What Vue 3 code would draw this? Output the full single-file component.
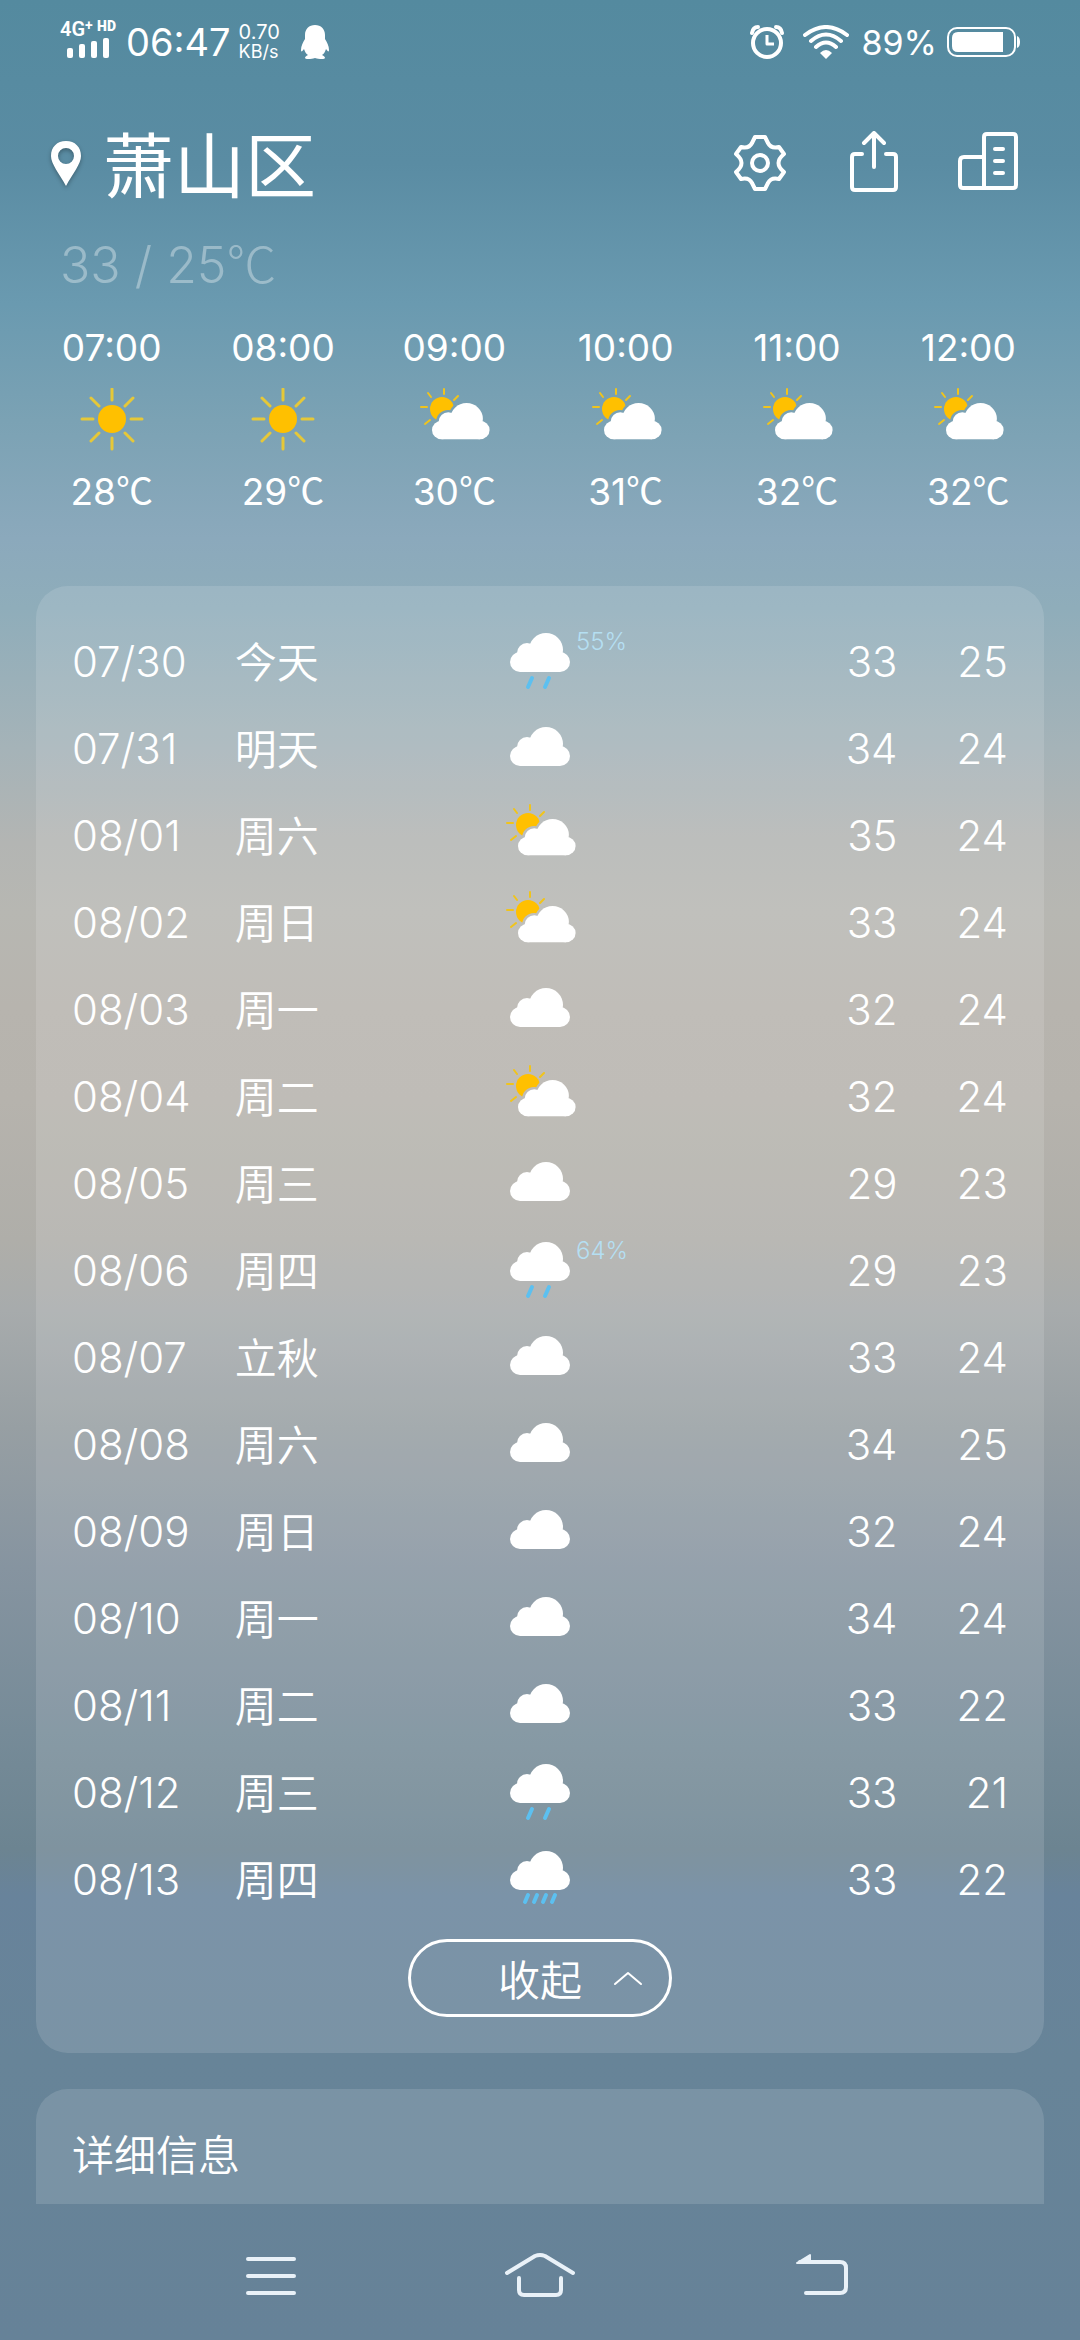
<script setup>
import { ref, computed } from 'vue'

const hours = [
  { time: '07:00', icon: 'sun', temp: 28 },
  { time: '08:00', icon: 'sun', temp: 29 },
  { time: '09:00', icon: 'partly', temp: 30 },
  { time: '10:00', icon: 'partly', temp: 31 },
  { time: '11:00', icon: 'partly', temp: 32 },
  { time: '12:00', icon: 'partly', temp: 32 }
]

const days = [
  { date: '07/30', name: '今天', icon: 'rain', chance: '55%', high: 33, low: 25 },
  { date: '07/31', name: '明天', icon: 'cloud', high: 34, low: 24 },
  { date: '08/01', name: '周六', icon: 'partly', high: 35, low: 24 },
  { date: '08/02', name: '周日', icon: 'partly', high: 33, low: 24 },
  { date: '08/03', name: '周一', icon: 'cloud', high: 32, low: 24 },
  { date: '08/04', name: '周二', icon: 'partly', high: 32, low: 24 },
  { date: '08/05', name: '周三', icon: 'cloud', high: 29, low: 23 },
  { date: '08/06', name: '周四', icon: 'rain', chance: '64%', high: 29, low: 23 },
  { date: '08/07', name: '立秋', icon: 'cloud', high: 33, low: 24 },
  { date: '08/08', name: '周六', icon: 'cloud', high: 34, low: 25 },
  { date: '08/09', name: '周日', icon: 'cloud', high: 32, low: 24 },
  { date: '08/10', name: '周一', icon: 'cloud', high: 34, low: 24 },
  { date: '08/11', name: '周二', icon: 'cloud', high: 33, low: 22 },
  { date: '08/12', name: '周三', icon: 'rain', high: 33, low: 21 },
  { date: '08/13', name: '周四', icon: 'heavy', high: 33, low: 22 }
]

const expanded = ref(true)
const shownDays = computed(() => (expanded.value ? days : days.slice(0, 5)))
</script>

<template>
  <div class="app">
    <svg class="defs" aria-hidden="true">
      <defs>
        <g id="cloud-shape">
          <circle cx="10" cy="29" r="10" />
          <circle cx="50" cy="29" r="10" />
          <rect x="10" y="19" width="40" height="20" />
          <circle cx="36" cy="17" r="17" />
          <circle cx="17" cy="20" r="10" />
        </g>
        <mask id="sun-mask" maskUnits="userSpaceOnUse" x="0" y="-4" width="80" height="68">
          <rect x="0" y="-4" width="80" height="68" fill="#fff" />
          <use href="#cloud-shape" transform="translate(17 14)" fill="#000" stroke="#000" stroke-width="4" />
        </mask>
        <symbol id="icon-sun" viewBox="0 0 80 64">
          <circle cx="40" cy="31" r="14" fill="#ffc000" />
          <path d="M40 1v11M40 50v11M10 31h11M59 31h11M19 10l8 8M61 10l-8 8M19 53l8-8M61 53l-8-8" stroke="#e6c838" stroke-width="3" stroke-linecap="round" />
        </symbol>
        <symbol id="icon-partly" viewBox="0 0 80 64">
          <g mask="url(#sun-mask)">
            <circle cx="28" cy="21" r="12" fill="#ffc000" />
            <path d="M30 1v5M14 5l3 4M7 19h6M11 36l5-4M44 8l-4 4" stroke="#f0c41c" stroke-width="2" stroke-linecap="round" />
          </g>
          <use href="#cloud-shape" transform="translate(18 15) scale(.96 .93)" fill="#fff" />
        </symbol>
        <symbol id="icon-cloud" viewBox="0 0 80 64">
          <use href="#cloud-shape" x="10" y="10" fill="#fff" />
        </symbol>
        <symbol id="icon-rain" viewBox="0 0 80 64">
          <use href="#cloud-shape" x="10" y="3" fill="#fff" />
          <path d="M32 48l-4 9M49 48l-4 9" stroke="#5cc0f0" stroke-width="4" stroke-linecap="round" />
        </symbol>
        <symbol id="icon-heavy" viewBox="0 0 80 64">
          <use href="#cloud-shape" x="10" y="3" fill="#fff" />
          <path d="M28 47l-3 7M37 47l-3 7M46 47l-3 7M55 47l-3 7" stroke="#5cc0f0" stroke-width="4" stroke-linecap="round" />
        </symbol>
      </defs>
    </svg>

    <div class="status">
      <div class="signal">
        <div class="net"><b>4G</b><b class="plus">+</b><b class="hd">HD</b></div>
        <svg width="42" height="20" viewBox="0 0 42 20" fill="#fff">
          <rect x="0" y="10" width="6" height="10" rx="2" />
          <rect x="12" y="6" width="6" height="14" rx="2" />
          <rect x="24" y="3" width="6" height="17" rx="2" />
          <rect x="36" y="0" width="6" height="20" rx="2" />
        </svg>
      </div>
      <span class="clock">06:47</span>
      <div class="speed"><span>0.70</span><span class="unit">KB/s</span></div>
      <svg class="qq" width="28" height="34" viewBox="0 0 28 34" fill="#fff">
        <path d="M14 0C8 0 4 4 4 10v4C2 17 0 21 0 25c0 2 1 2 3-1 1 3 2 5 4 6-2 1-3 2-3 3 0 1 3 1 5 1 3 0 4-1 5-1s2 1 5 1c2 0 5 0 5-1s-1-2-3-3c2-1 3-3 4-6 2 3 3 3 3 1 0-4-2-8-4-11v-4C24 4 20 0 14 0z" />
      </svg>
      <span class="fill"></span>
      <svg width="36" height="36" viewBox="0 0 36 36" fill="none" stroke="#fff">
        <circle cx="18" cy="19" r="14" stroke-width="4" />
        <path d="M18 11v9h7" stroke-width="3" stroke-linejoin="round" />
        <path d="M9 3Q4 3 3 9M27 3Q32 3 33 9" stroke-width="4" stroke-linecap="round" />
      </svg>
      <svg class="wifi" width="46" height="34" viewBox="0 0 46 34" fill="none" stroke="#fff" stroke-width="4" stroke-linecap="round">
        <path d="M2 10Q23-6 44 10M8 16Q23 3 38 16M13 22Q23 13 33 22" />
        <path d="M23 34l-6-6q6-6 12 0z" fill="#fff" stroke="none" />
      </svg>
      <span class="percent">89%</span>
      <svg width="73" height="30" viewBox="0 0 73 30">
        <rect x="1" y="1" width="67" height="28" rx="9" fill="none" stroke="#fff" stroke-width="2" />
        <path d="M11 5H56V25H11Q5 25 5 19V11Q5 5 11 5z" fill="#fff" />
        <path d="M70 9q3 1 3 6t-3 6z" fill="#fff" />
      </svg>
    </div>

    <header class="header">
      <svg class="pin" width="34" height="48" viewBox="0 0 34 48">
        <path d="M17 2C8 2 2 8 2 17c0 8 8 17 15 30 7-13 15-22 15-30C32 8 26 2 17 2zm0 7a8 8 0 1 1 0 16 8 8 0 0 1 0-16z" fill="#fff" fill-rule="evenodd" />
      </svg>
      <h1>萧山区</h1>
      <div class="actions">
        <button type="button" aria-label="设置">
          <svg width="60" height="64" viewBox="-30 -32 60 64">
            <path d="M-5-26H5L8-20Q11-14 19-16L24-9Q13 0 24 9L19 16Q11 14 8 20L5 26H-5L-8 20Q-11 14-19 16L-24 9Q-13 0-24-9L-19-16Q-11-14-8-20z" />
            <circle cx="0" cy="0" r="8" />
          </svg>
        </button>
        <button type="button" aria-label="分享">
          <svg width="60" height="64" viewBox="0 0 60 64">
            <path d="M18 23H11Q8 23 8 26V56Q8 59 11 59H49Q52 59 52 56V26Q52 23 49 23H42M30 36V3M20 12L30 2L40 12" />
          </svg>
        </button>
        <button type="button" aria-label="城市管理">
          <svg width="60" height="64" viewBox="0 0 60 64">
            <path d="M26 57V6Q26 3 29 3H55Q58 3 58 6V54Q58 57 55 57H5Q2 57 2 54V30Q2 26 6 26H26M37 18H45M37 30H45M37 42H45" />
          </svg>
        </button>
      </div>
    </header>

    <p class="summary">33 / 25<span class="degree">℃</span></p>

    <section class="hourly">
      <div v-for="h in hours" :key="h.time" class="hour">
        <span>{{ h.time }}</span>
        <svg class="icon"><use :href="'#icon-' + h.icon" /></svg>
        <span>{{ h.temp }}<span class="degree">℃</span></span>
      </div>
    </section>

    <section class="card daily">
      <table>
        <tbody>
          <tr v-for="d in shownDays" :key="d.date">
            <td class="date">{{ d.date }}</td>
            <td class="name">{{ d.name }}</td>
            <td class="sky">
              <div class="sky-box">
                <svg class="icon"><use :href="'#icon-' + d.icon" /></svg>
                <span v-if="d.chance" class="chance">{{ d.chance }}</span>
              </div>
            </td>
            <td class="high">{{ d.high }}</td>
            <td class="low">{{ d.low }}</td>
          </tr>
        </tbody>
      </table>
      <button type="button" class="toggle" @click="expanded = !expanded">
        <span class="label">{{ expanded ? '收起' : '展开' }}</span>
        <svg :class="{ down: !expanded }" width="32" height="18" viewBox="0 0 32 18" fill="none" stroke="#fff" stroke-width="2" stroke-linecap="round" stroke-linejoin="round">
          <path d="M3 15L16 4L29 15" />
        </svg>
      </button>
    </section>

    <section class="card detail">
      <h2>详细信息</h2>
    </section>

    <nav class="nav">
      <button type="button" aria-label="菜单">
        <svg width="72" height="48" viewBox="0 0 72 48"><path d="M20 7H66M20 24H66M20 41H66" /></svg>
      </button>
      <button type="button" aria-label="主页">
        <svg width="72" height="48" viewBox="0 0 72 48"><path d="M3 21L31 4Q36 2 41 4L69 21M15 26V38Q15 43 20 43H52Q57 43 57 38V26" /></svg>
      </button>
      <button type="button" aria-label="返回">
        <svg width="72" height="48" viewBox="0 0 72 48"><path d="M20 10H60Q66 10 66 16V35Q66 41 60 41H26" /><path d="M17 11L30 3V11z" class="head" /></svg>
      </button>
    </nav>
  </div>
</template>

<style>
body {
  margin: 0;
}
</style>

<style scoped>
.app {
  display: flex;
  flex-direction: column;
  min-height: 100vh;
  color: #fff;
  font-family: Inter, "Noto Sans CJK SC", sans-serif;
  background: linear-gradient(#548a9f 0%, #5a8ca3 7%, #6a9ab0 13%, #7ba2b4 18%, #8ba9bc 23%, #8fadba 26%, #a5b3b8 32%, #b3b5b3 36%, #b7b7b2 39%, #b7b4ae 43%, #b6b3ad 47%, #afaea9 53%, #a7abac 56%, #979fa3 61%, #8694a0 67%, #768b98 74%, #6c8491 79%, #68839b 81%, #678498 88%, #668298 100%);
}

.defs {
  position: absolute;
  width: 0;
  height: 0;
}

.status {
  display: flex;
  align-items: center;
  height: 84px;
  padding: 0 60px;
}

.signal {
  display: flex;
  flex-direction: column;
  align-items: center;
  width: 56px;
  margin-right: 10px;
  padding-bottom: 6px;
}

.net {
  display: flex;
  width: 100%;
  font: 20px/18px Roboto, sans-serif;
}

.net b {
  font-weight: 600;
}

.net .plus {
  font-size: 14px;
  line-height: 10px;
}

.net .hd {
  margin-left: auto;
  font-size: 14px;
  line-height: 12px;
  font-weight: 900;
}

.clock {
  font-size: 38px;
}

.speed {
  display: flex;
  flex-direction: column;
  width: 46px;
  margin-left: 8px;
  font-size: 20px;
  line-height: 20px;
}

.speed .unit {
  font-size: 18px;
}

.qq {
  margin-left: 16px;
}

.fill {
  flex: 1;
}

.wifi {
  margin: 0 12px 0 18px;
}

.percent {
  margin-right: 10px;
  font-size: 34px;
}

.header {
  display: flex;
  align-items: center;
  height: 158px;
  padding: 0 62px 0 49px;
}

.pin {
  filter: drop-shadow(0 2px 2px rgba(0, 0, 0, 0.3));
}

h1 {
  margin: 0 0 0 20px;
  padding-top: 6px;
  font-size: 71px;
  line-height: 96px;
  font-weight: 400;
}

.actions {
  display: flex;
  gap: 54px;
  margin-left: auto;
}

button {
  padding: 0;
  border: 0;
  background: none;
  color: inherit;
  font: inherit;
}

.actions svg,
.nav svg {
  display: block;
  fill: none;
  stroke: #fff;
  stroke-width: 4;
  stroke-linecap: round;
  stroke-linejoin: round;
}

.summary {
  margin: 0;
  padding: 0 60px;
  font-size: 50px;
  line-height: 46px;
  font-weight: 300;
  color: rgba(255, 255, 255, 0.35);
}

.degree {
  font-family: "Noto Sans CJK SC", sans-serif;
  line-height: 0;
}

.hourly {
  display: grid;
  grid-template-columns: repeat(6, 1fr);
  margin-top: 36px;
  padding: 0 26px;
}

.hour {
  display: flex;
  flex-direction: column;
  align-items: center;
  gap: 16px;
  font-size: 37px;
  line-height: 48px;
}

.icon {
  display: block;
  width: 80px;
  height: 64px;
}

.card {
  margin: 0 36px;
  padding: 0 36px;
  border-radius: 32px;
  background: rgba(255, 255, 255, 0.13);
  font-size: 42px;
  font-weight: 300;
}

.daily {
  margin-top: 70px;
  padding-top: 32px;
  padding-bottom: 36px;
}

table {
  width: 100%;
  table-layout: fixed;
  border-collapse: collapse;
}

td {
  height: 87px;
  padding: 0;
  line-height: 64px;
  vertical-align: middle;
  box-sizing: border-box;
}

.date {
  width: 17.4%;
}

.name {
  width: 21.4%;
  padding-bottom: 4px;
  font-family: "Noto Sans CJK SC", sans-serif;
  font-weight: 350;
}

.sky {
  width: 22.4%;
}

.high {
  width: 27%;
  text-align: right;
}

.low {
  width: 11.8%;
  text-align: right;
}

.sky-box {
  position: relative;
  width: 80px;
  margin: 0 auto;
}

.chance {
  position: absolute;
  top: 0;
  left: 76px;
  font-size: 24px;
  line-height: 24px;
  color: #b5dff2;
}

.toggle {
  display: grid;
  grid-template-columns: 1fr auto 1fr;
  align-items: center;
  width: 264px;
  height: 78px;
  margin: 16px auto 0;
  border: 3px solid #fff;
  border-radius: 39px;
}

.toggle .label {
  grid-column: 2;
  font-family: "Noto Sans CJK SC", sans-serif;
  font-weight: 350;
  line-height: 64px;
}

.toggle svg {
  margin-left: 30px;
}

.toggle .down {
  transform: rotate(180deg);
}

.detail {
  flex: 1;
  min-height: 115px;
  margin-top: 36px;
  border-radius: 32px 32px 0 0;
}

h2 {
  margin: 32px 0 0;
  font-family: "Noto Sans CJK SC", sans-serif;
  font-size: 42px;
  line-height: 64px;
  font-weight: 350;
}

.nav {
  display: grid;
  grid-template-columns: repeat(3, 1fr);
  justify-items: center;
  align-items: center;
  height: 136px;
  padding: 8px 126px 0;
  box-sizing: border-box;
}

.nav svg {
  stroke: #e9f1f8;
}

.nav .head {
  fill: #e9f1f8;
  stroke-width: 2;
}
</style>
